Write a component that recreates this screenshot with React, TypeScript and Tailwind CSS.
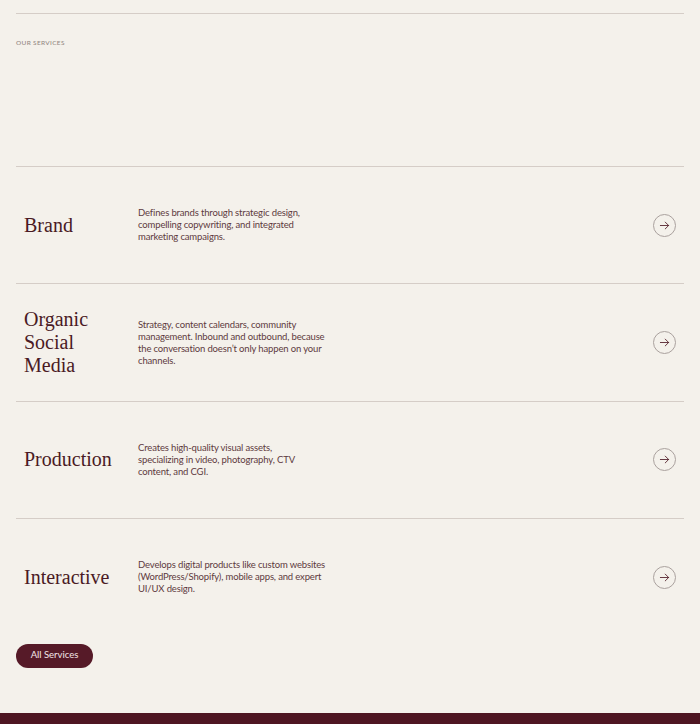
import React from 'react';

interface Service {
    title: string[];
    description: string[];
}

const services: Service[] = [
    {
        title: ['Brand'],
        description: ['Defines brands through strategic design,', 'compelling copywriting, and integrated', 'marketing campaigns.'],
    },
    {
        title: ['Organic', 'Social', 'Media'],
        description: [
            'Strategy, content calendars, community',
            'management. Inbound and outbound, because',
            'the conversation doesn\u2019t only happen on your',
            'channels.',
        ],
    },
    {
        title: ['Production'],
        description: ['Creates high-quality visual assets,', 'specializing in video, photography, CTV', 'content, and CGI.'],
    },
    {
        title: ['Interactive'],
        description: [
            'Develops digital products like custom websites',
            '(WordPress/Shopify), mobile apps, and expert',
            'UI/UX design.',
        ],
    },
];

const ArrowCircle: React.FC = () => (
    <span className="flex h-[23px] w-[23px] items-center justify-center rounded-full border border-[#aaa19e]">
        <svg width="11" height="11" viewBox="0 0 12 12" fill="none" stroke="#5b2a33" strokeWidth="1" strokeLinecap="round" strokeLinejoin="round">
            <path d="M1.5 6h9" />
            <path d="M6.8 2.3 10.5 6l-3.7 3.7" />
        </svg>
    </span>
);

const ServiceRow: React.FC<{ service: Service }> = ({ service }) => (
    <div className="flex h-[117.4px] items-center border-t border-[#d5cdc7]">
        <h3 className="w-[122px] shrink-0 pl-2 font-['Liberation_Serif',serif] text-[20px] leading-[23px] text-[#4a1a24]">
            {service.title.map((line) => (
                <span key={line} className="block">
                    {line}
                </span>
            ))}
        </h3>
        <p className="font-['Lato',sans-serif] text-[9.5px] leading-[12px] tracking-[-0.15px] whitespace-nowrap text-[#5e3a40]">
            {service.description.map((line) => (
                <span key={line} className="block">
                    {line}
                </span>
            ))}
        </p>
        <div className="ml-auto mr-2">
            <ArrowCircle />
        </div>
    </div>
);

export default function App() {
    return (
        <div className="flex min-h-[724px] flex-col bg-[#f4f1eb]">
            <section className="px-4 pt-[13px]">
                <div className="border-t border-[#d5cdc7] pt-[25px]">
                    <p className="font-['Lato',sans-serif] text-[6.5px] font-medium uppercase leading-[8px] tracking-[0.05em] text-[#958a85]">
                        Our Services
                    </p>
                </div>
                <div className="mt-[119px]">
                    {services.map((service) => (
                        <ServiceRow key={service.title.join(' ')} service={service} />
                    ))}
                </div>
                <button className="mt-[8px] flex h-[24px] w-[77px] items-center justify-center rounded-full bg-[#561a28] font-['Lato',sans-serif] text-[9.5px] text-[#f3e6e8]">
                    All Services
                </button>
            </section>
            <footer className="mt-[45px] h-[11px] grow bg-[#4e1622]" />
        </div>
    );
}
